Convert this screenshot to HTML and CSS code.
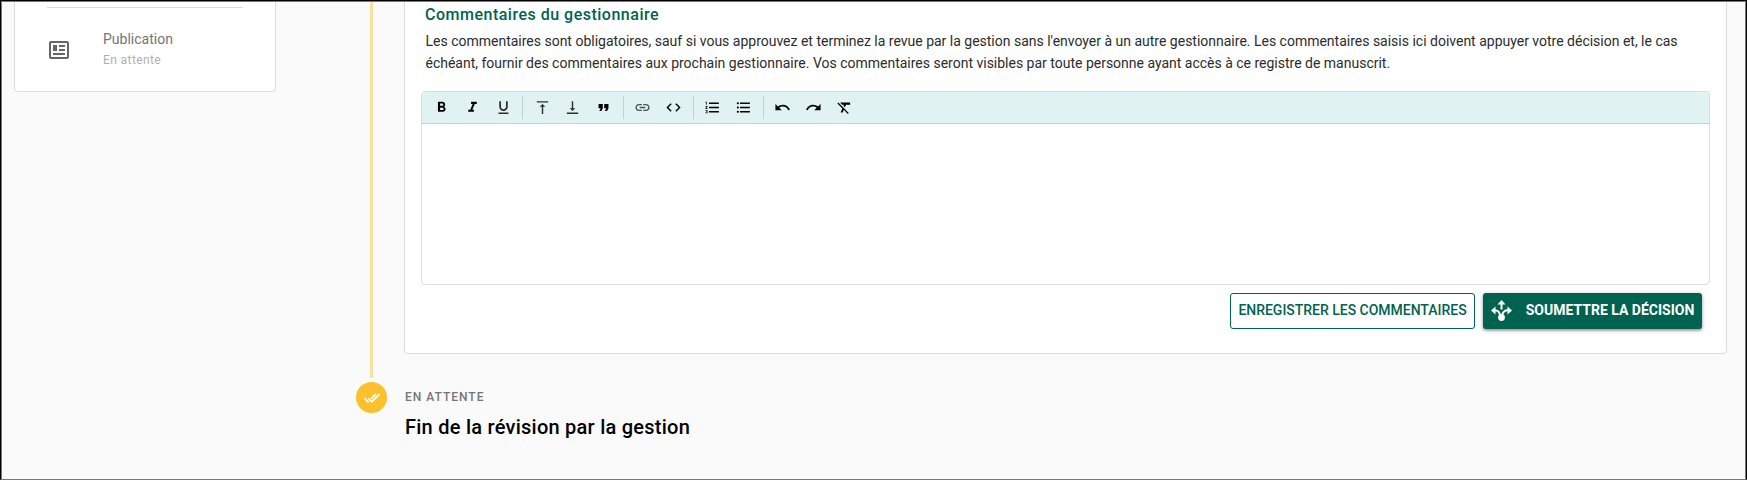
FILE: index.html
```html
<!DOCTYPE html>
<html lang="fr">
<head>
<meta charset="utf-8">
<title>Révision par la gestion</title>
<link rel="stylesheet" href="styles.css">
</head>
<body>
<div class="page">
  <aside class="steps">
    <div class="divider"></div>
    <div class="step">
      <svg class="step-icon" viewBox="0 0 24 24"><path d="M20 5V19H4V5H20M20 3H4C2.89 3 2 3.89 2 5V19C2 20.11 2.89 21 4 21H20C21.11 21 22 20.11 22 19V5C22 3.89 21.11 3 20 3M18 15H6V17H18V15M10 7H6V13H10V7M12 9H18V7H12V9M18 11H12V13H18V11Z"/></svg>
      <div>
        <div class="step-name">Publication</div>
        <div class="step-status">En attente</div>
      </div>
    </div>
  </aside>
  <main class="timeline">
    <div class="entry">
      <div class="rail"><div class="line"></div></div>
      <section class="card">
        <h2 class="card-title">Commentaires du gestionnaire</h2>
        <p class="help">Les commentaires sont obligatoires, sauf si vous approuvez et terminez la revue par la gestion sans l'envoyer à un autre gestionnaire. Les commentaires saisis ici doivent appuyer votre décision et, le cas<br>échéant, fournir des commentaires aux prochain gestionnaire. Vos commentaires seront visibles par toute personne ayant accès à ce registre de manuscrit.</p>
        <div class="editor">
          <div class="toolbar">
            <div class="group">
              <span class="tool"><svg viewBox="0 0 24 24"><path d="M15.6 10.79c.97-.67 1.65-1.77 1.65-2.79 0-2.26-1.75-4-4-4H7v14h7.04c2.09 0 3.71-1.7 3.71-3.79 0-1.52-.86-2.82-2.15-3.42zM10 6.5h3c.83 0 1.5.67 1.5 1.5s-.67 1.5-1.5 1.5h-3v-3zm3.5 9H10v-3h3.5c.83 0 1.5.67 1.5 1.5s-.67 1.5-1.5 1.5z"/></svg></span>
              <span class="tool"><svg viewBox="0 0 24 24"><path d="M10 4v3h2.21l-3.42 8H6v3h8v-3h-2.21l3.42-8H18V4z"/></svg></span>
              <span class="tool soft"><svg viewBox="0 0 24 24"><path d="M12 17c3.31 0 6-2.69 6-6V3h-2.5v8c0 1.93-1.57 3.5-3.5 3.5S8.500 12.930 8.500 11V3H6v8c0 3.310 2.690 6 6 6zm-7 2v2h14v-2H5z"/></svg></span>
            </div>
            <i class="sep"></i>
            <div class="group">
              <span class="tool soft"><svg viewBox="0 0 24 24"><path d="M8 11h3v10h2V11h3l-4-4-4 4zM4 3v2h16V3H4z"/></svg></span>
              <span class="tool soft"><svg viewBox="0 0 24 24"><path d="M16 13h-3V3h-2v10H8l4 4 4-4zM4 19v2h16v-2H4z"/></svg></span>
              <span class="tool"><svg viewBox="0 0 24 24"><path d="M6 17h3l2-4V7H5v6h3zm8 0h3l2-4V7h-6v6h3z"/></svg></span>
            </div>
            <i class="sep"></i>
            <div class="group">
              <span class="tool faint"><svg viewBox="0 0 24 24"><path d="M3.900 12c0-1.710 1.390-3.100 3.100-3.100h4V7H7c-2.760 0-5 2.240-5 5s2.240 5 5 5h4v-1.900H7c-1.710 0-3.100-1.390-3.100-3.100zM8 13h8v-2H8v2zm9-6h-4v1.900h4c1.710 0 3.100 1.390 3.100 3.100s-1.390 3.100-3.100 3.100h-4V17h4c2.760 0 5-2.240 5-5s-2.240-5-5-5z"/></svg></span>
              <span class="tool"><svg viewBox="0 0 24 24"><path d="M9.400 16.600L4.800 12l4.600-4.600L8 6l-6 6 6 6 1.400-1.400zm5.200 0l4.600-4.600-4.600-4.600L16 6l6 6-6 6-1.400-1.400z"/></svg></span>
            </div>
            <i class="sep"></i>
            <div class="group">
              <span class="tool"><svg viewBox="0 0 24 24"><path d="M2 17h2v.5H3v1h1v.5H2v1h3v-4H2v1zm1-9h1V4H2v1h1v3zm-1 3h1.800L2 13.100v.9h3v-1H3.200L5 10.900V10H2v1zm5-6v2h14V5H7zm0 14h14v-2H7v2zm0-6h14v-2H7v2z"/></svg></span>
              <span class="tool"><svg viewBox="0 0 24 24"><path d="M4 10.500c-.83 0-1.500.67-1.500 1.500s.67 1.500 1.500 1.500 1.500-.67 1.500-1.500-.67-1.500-1.500-1.500zm0-6c-.83 0-1.500.67-1.500 1.500S3.170 7.500 4 7.500 5.500 6.830 5.500 6 4.830 4.500 4 4.500zm0 12c-.83 0-1.500.68-1.500 1.500s.68 1.500 1.500 1.500 1.500-.68 1.500-1.500-.67-1.500-1.500-1.500zM7 19h14v-2H7v2zm0-6h14v-2H7v2zm0-8v2h14V5H7z"/></svg></span>
            </div>
            <i class="sep"></i>
            <div class="group">
              <span class="tool"><svg viewBox="0 0 24 24"><path d="M12.500 8c-2.650 0-5.050.99-6.900 2.600L2 7v9h9l-3.620-3.620c1.390-1.160 3.160-1.880 5.120-1.880 3.540 0 6.550 2.310 7.600 5.500l2.370-.78C21.080 11.030 17.150 8 12.500 8z"/></svg></span>
              <span class="tool"><svg viewBox="0 0 24 24"><path d="M18.400 10.600C16.550 8.990 14.150 8 11.500 8c-4.650 0-8.580 3.030-9.960 7.220L3.900 16c1.050-3.190 4.050-5.500 7.600-5.500 1.950 0 3.730.72 5.120 1.880L13 16h9V7l-3.600 3.600z"/></svg></span>
              <span class="tool"><svg viewBox="0 0 24 24"><path d="M3.270 5L2 6.270l6.970 6.970L6.500 19h3l1.570-3.660L16.730 21 18 19.730 3.550 5.270 3.270 5zM6 5v.18L8.820 8h2.400l-.72 1.680 2.100 2.100L14.210 8H20V5H6z"/></svg></span>
            </div>
          </div>
          <div class="editor-body"></div>
        </div>
        <div class="actions">
          <button class="btn btn-outline"><span>ENREGISTRER LES COMMENTAIRES</span></button>
          <button class="btn btn-solid">
            <svg class="btn-icon" viewBox="0 0 21 21"><g fill="none" stroke="#fff" stroke-width="2"><path d="M10.500 3V9.500M3 10.500H5Q8 10.500 9.500 16M18 10.200H16Q11.500 11 11 16"/></g><path fill="#fff" d="M10.500 0L14.500 4.500H6.500zM0 10.500L4.500 6.500V14.500zM21 10.500L16.500 6.500V14.500z"/><circle cx="10.500" cy="17.500" r="3.400" fill="#fff"/></svg>
            <span>SOUMETTRE LA DÉCISION</span>
          </button>
        </div>
      </section>
    </div>
    <div class="entry entry-end">
      <div class="rail"><div class="dot"><svg viewBox="0 0 24 24"><path d="M18 7l-1.410-1.410-6.340 6.340 1.410 1.410L18 7zm4.240-1.410L11.660 16.170 7.480 12l-1.410 1.410L11.660 19l12-12-1.420-1.410zM.41 13.410L6 19l1.410-1.410L1.830 12 .41 13.410z"/></svg></div></div>
      <div class="end-text">
        <div class="status">EN ATTENTE</div>
        <h3 class="end-title">Fin de la révision par la gestion</h3>
      </div>
    </div>
  </main>
</div>
</body>
</html>
```
FILE: styles.css
```css
* { box-sizing: border-box; }
body { margin: 0; font-family: Roboto, "Liberation Sans", sans-serif; font-size: 14px; color: #2c2c2c; }
h2, h3, p { margin: 0; }
svg { display: block; flex: none; }
.page {
  display: flex;
  align-items: flex-start;
  height: 480px;
  overflow: hidden;
  background: #fafafa;
  border: 1px solid #000;
  border-bottom-color: #777;
  box-shadow: inset 1px 1px #777, inset -1px 0 #777;
}
.steps {
  width: 262px;
  height: 90px;
  margin: 1px 0 0 13px;
  padding: 5px 32px 0;
  background: #fff;
  border: 1px solid #ddd;
  border-top: 0;
  border-radius: 0 0 4px 4px;
}
.divider { height: 1px; background: #ddd; }
.step { display: flex; align-items: center; gap: 32px; padding-top: 19px; }
.step-icon { width: 24px; height: 24px; fill: #666; margin-top: 4px; }
.step-name { color: #757575; line-height: 24px; font-size: 14px; }
.step-status { color: #b0b0b0; font-size: 12px; line-height: 18px; letter-spacing: .4px; }
.timeline { margin: 1px 0 0 80px; width: 1372px; }
.entry { display: flex; }
.rail { width: 31px; margin-right: 17px; flex: none; display: flex; justify-content: center; }
.line { width: 3px; height: 376px; background: #fbdf9c; }
.card {
  width: 1323px;
  height: 352px;
  padding: 0 16px;
  background: #fff;
  border: 1px solid #ddd;
  border-top: 0;
  border-radius: 0 0 4px 4px;
}
.card-title { padding: 1px 0 0 4px; font-size: 16px; font-weight: 500; line-height: 24px; letter-spacing: .5px; color: #00634f; }
.help { padding: 3px 0 0 4.500px; line-height: 22px; letter-spacing: -.005px; white-space: nowrap; }
.editor { height: 194px; margin-top: 17px; border: 1px solid #ddd; border-radius: 4px; overflow: hidden; }
.toolbar { display: flex; align-items: center; height: 32px; padding-left: 4px; background: #e0f2f1; border-bottom: 1px solid #c2d3d2; }
.group { display: flex; }
.tool { width: 30.900px; display: flex; justify-content: center; }
.tool svg { width: 17px; height: 17px; }
.soft { opacity: .8; }
.faint { opacity: .65; }
.sep { width: 1px; height: 23px; margin: 0 3.300px 0 3.700px; background: #c2d3d2; }
.actions { display: flex; justify-content: flex-end; gap: 8px; padding: 8px 8px 0 0; }
.btn { height: 36px; display: flex; align-items: center; justify-content: center; padding: 0 0 2px; border-radius: 3px; font: 500 14px Roboto, sans-serif; white-space: nowrap; }
.btn-outline { width: 245px; color: #00634f; background: #fff; border: 1px solid #00634f; font-weight: 500; letter-spacing: -.02px; }
.btn-solid { width: 219px; gap: 14px; color: #fff; background: #00634f; border: 0; font-weight: 700; box-shadow: 0 1px 4px rgba(0,0,0,.3), 0 2px 2px rgba(0,0,0,.2); }
.btn-icon { width: 21px; height: 21px; }
.entry-end { padding-top: 4px; }
.end-text { padding-left: 1px; }
.dot { width: 31px; height: 31px; border-radius: 50%; background: #fbc02d; display: flex; align-items: center; justify-content: center; }
.dot svg { width: 16px; height: 16px; fill: #fff; stroke: #fff; stroke-width: 1; }
.status { padding-top: 7px; font-size: 12px; line-height: 16px; font-weight: 500; letter-spacing: 1px; color: #757575; }
.end-title { font-size: 20px; line-height: 32px; padding-top: 6px; font-weight: 500; letter-spacing: .25px; color: #000; }
```
